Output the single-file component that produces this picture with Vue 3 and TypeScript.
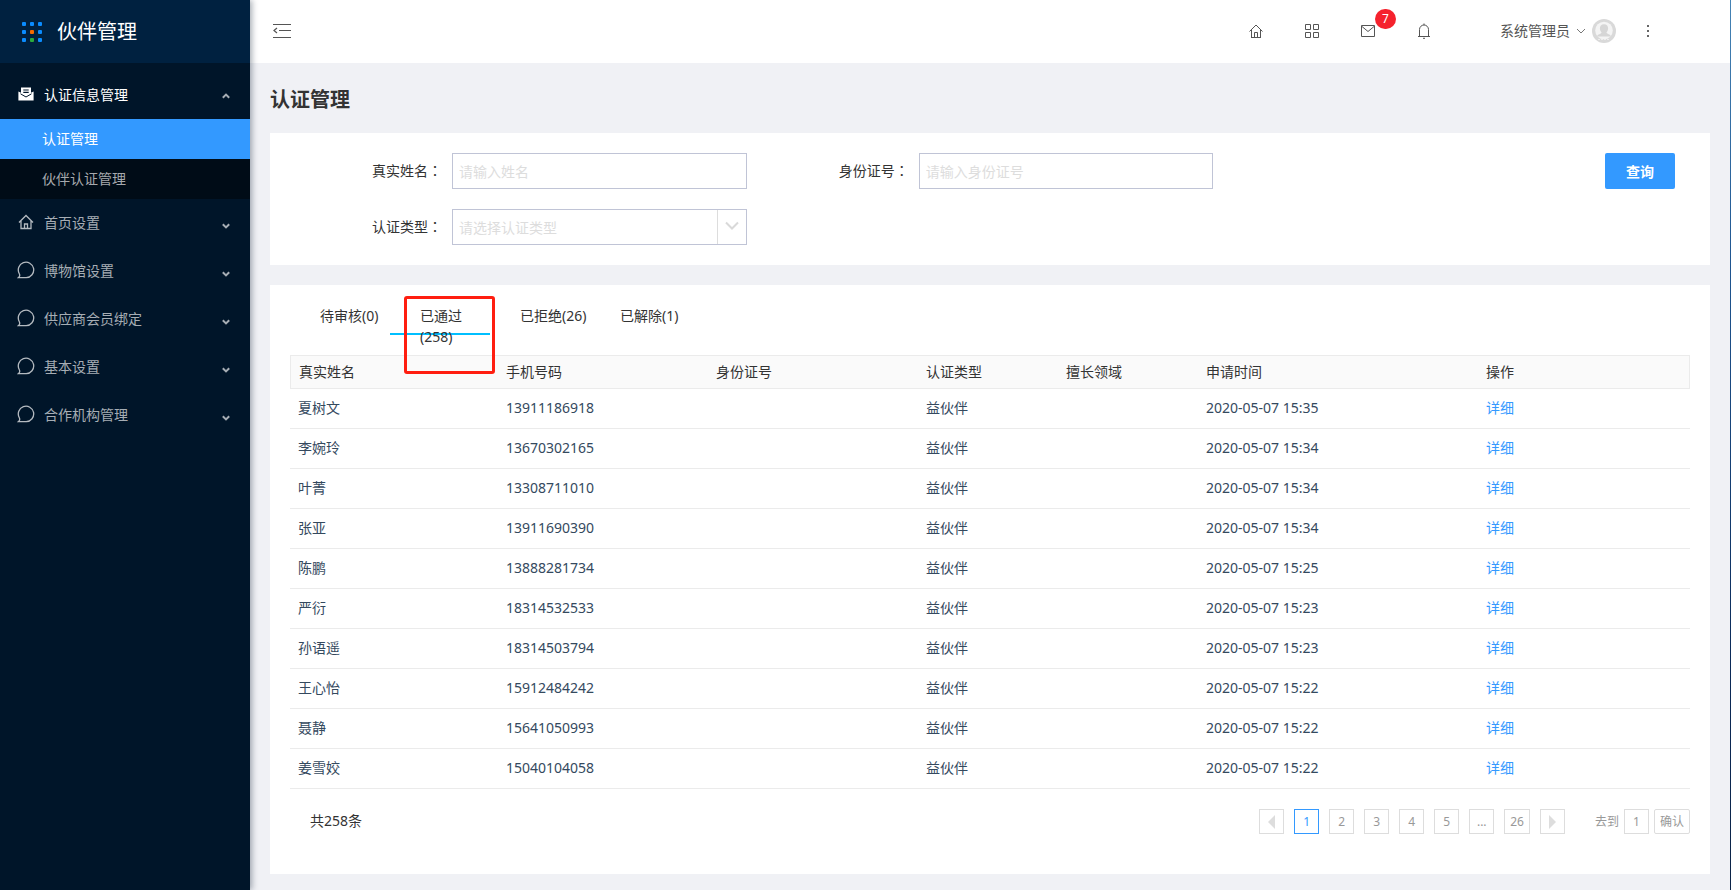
<script setup lang="ts">
import { ref } from 'vue'

interface Row {
  name: string
  phone: string
  time: string
}

const menus = [
  { label: '首页设置', icon: 'home' },
  { label: '博物馆设置', icon: 'chat' },
  { label: '供应商会员绑定', icon: 'chat' },
  { label: '基本设置', icon: 'chat' },
  { label: '合作机构管理', icon: 'chat' },
]

const tabs = ['待审核(0)', '已通过(258)', '已拒绝(26)', '已解除(1)']
const activeTab = ref(1)

const columns = ['真实姓名', '手机号码', '身份证号', '认证类型', '擅长领域', '申请时间', '操作']

const rows: Row[] = [
  { name: '夏树文', phone: '13911186918', time: '2020-05-07 15:35' },
  { name: '李婉玲', phone: '13670302165', time: '2020-05-07 15:34' },
  { name: '叶菁', phone: '13308711010', time: '2020-05-07 15:34' },
  { name: '张亚', phone: '13911690390', time: '2020-05-07 15:34' },
  { name: '陈鹏', phone: '13888281734', time: '2020-05-07 15:25' },
  { name: '严衍', phone: '18314532533', time: '2020-05-07 15:23' },
  { name: '孙语遥', phone: '18314503794', time: '2020-05-07 15:23' },
  { name: '王心怡', phone: '15912484242', time: '2020-05-07 15:22' },
  { name: '聂静', phone: '15641050993', time: '2020-05-07 15:22' },
  { name: '姜雪姣', phone: '15040104058', time: '2020-05-07 15:22' },
]

const pages = ['1', '2', '3', '4', '5', '...', '26']
const currentPage = ref('1')
const jumpPage = ref('1')
const realName = ref('')
const idNumber = ref('')
const certType = ref('')
</script>

<template>
  <div class="page">
    <aside class="sidebar">
      <div class="brand">
        <svg class="logo" viewBox="0 0 22 22" aria-hidden="true">
          <g fill="#0a8cff">
            <rect x="1" y="1" width="4" height="4" rx="1" /><rect x="9" y="1" width="4" height="4" rx="1" /><rect x="17" y="1" width="4" height="4" rx="1" />
            <rect x="1" y="9" width="4" height="4" rx="1" /><rect x="17" y="9" width="4" height="4" rx="1" />
            <rect x="1" y="17" width="4" height="4" rx="1" /><rect x="17" y="17" width="4" height="4" rx="1" />
          </g>
          <rect x="9" y="9" width="4" height="4" rx="1" fill="#f56a00" />
          <rect x="9" y="17" width="4" height="4" rx="1" fill="#2bab3c" />
        </svg>
        <span>伙伴管理</span>
      </div>
      <nav class="menu">
        <button type="button" class="menu-item open">
          <svg class="menu-icon" viewBox="0 0 18 18" aria-hidden="true">
            <path d="M4 2.5h10v5.2l2.6-1.2v9H1.4v-9L4 7.7z" fill="#fff" />
            <path d="M6.3 5h5.4M6.3 7.4h5.4" stroke="#001529" stroke-width="1.1" />
            <path d="M3.5 8.8L9 12l5.5-3.2" fill="none" stroke="#001529" stroke-width="1" />
          </svg>
          <span class="menu-text">认证信息管理</span>
          <svg class="arrow" viewBox="0 0 8 8" aria-hidden="true"><path d="M.8 5.8L4 2.6l3.2 3.2" /></svg>
        </button>
        <div class="submenu">
          <a href="#" class="active">认证管理</a>
          <a href="#">伙伴认证管理</a>
        </div>
        <button v-for="m in menus" :key="m.label" type="button" class="menu-item">
          <svg v-if="m.icon === 'home'" class="menu-icon line" viewBox="0 0 18 18" aria-hidden="true">
            <path d="M2 9.5L9 2.5l7 7M4 8v7.500h10V8M7.500 15.500V11h3v4.500M4 15.500h10" />
          </svg>
          <svg v-else class="menu-icon line" viewBox="0 0 18 18" aria-hidden="true">
            <path d="M1.500 16.600H9.200A7.700 7.700 0 1 0 2.300 12.700Q3.500 15 1.500 16.600z" />
          </svg>
          <span class="menu-text">{{ m.label }}</span>
          <svg class="arrow down" viewBox="0 0 8 8" aria-hidden="true"><path d="M.8 2.2L4 5.4l3.2-3.2" /></svg>
        </button>
      </nav>
    </aside>

    <div class="main">
      <header class="topbar">
        <button type="button" class="fold" aria-label="收起菜单">
          <svg viewBox="0 0 18 16" aria-hidden="true">
            <path d="M0 1.500h18M6 7.500h12M0 14.500h18M4 5L1 7.500L4 10" fill="none" stroke="#555" stroke-width="1.200" />
          </svg>
        </button>
        <div class="tools">
          <button type="button" class="tool" aria-label="首页">
            <svg viewBox="0 0 16 16" aria-hidden="true">
              <path d="M1.500 8.500L8 2l6.500 6.500M3.500 7v7.500h9V7M6.500 14.500V9.500h3v5M3 14.500h10" />
            </svg>
          </button>
          <button type="button" class="tool" aria-label="应用">
            <svg viewBox="0 0 16 16" aria-hidden="true">
              <path d="M1.500 1.500h5v5h-5zM9.500 1.500h5v5h-5zM1.500 9.500h5v5h-5zM9.500 9.500h5v5h-5z" />
            </svg>
          </button>
          <button type="button" class="tool" aria-label="消息">
            <svg viewBox="0 0 16 16" aria-hidden="true">
              <path d="M1.500 2.500h13v11h-13zM2 3.500l6 5l6-5" />
            </svg>
            <span class="badge">7</span>
          </button>
          <button type="button" class="tool" aria-label="通知">
            <svg viewBox="0 0 16 16" aria-hidden="true">
              <path d="M2 13.500h12M3.500 13.500V6.500a4.500 4.500 0 0 1 9 0v7M8 .5V2M7 15.300h2" />
            </svg>
          </button>
        </div>
        <button type="button" class="user">
          <span>系统管理员</span>
          <svg class="user-arrow" viewBox="0 0 10 10" aria-hidden="true"><path d="M1 3l4 4l4-4" /></svg>
          <svg class="avatar" viewBox="0 0 24 24" aria-hidden="true">
            <circle cx="12" cy="12" r="12" fill="#d9d9d9" />
            <circle cx="12" cy="11.500" r="8.800" fill="#f4f4f4" />
            <path d="M12 5.200c-2.800 0-4.300 1.900-4.100 4.400.1 1.800.8 3.100 1.700 4-.6 1.500-3.600 1.600-4.800 3.900h14.400c-1.200-2.300-4.200-2.400-4.800-3.900.9-.9 1.600-2.200 1.700-4 .2-2.500-1.300-4.400-4.100-4.400z" fill="#d6d6d6" />
            <path d="M6 20.500h12" stroke="#eee" stroke-width="1" stroke-dasharray="2 1" />
          </svg>
        </button>
        <button type="button" class="more" aria-label="更多">
          <svg viewBox="0 0 16 16" aria-hidden="true">
            <path d="M7 2h2v2H7zM7 7h2v2H7zM7 12h2v2H7z" fill="#666" />
          </svg>
        </button>
      </header>

      <main class="content">
        <h1>认证管理</h1>

        <form class="panel search" @submit.prevent>
          <div class="field">
            <label for="real-name">真实姓名<span class="colon">：</span></label>
            <input id="real-name" v-model="realName" type="text" placeholder="请输入姓名" />
          </div>
          <div class="field">
            <label for="id-number">身份证号<span class="colon">：</span></label>
            <input id="id-number" v-model="idNumber" type="text" placeholder="请输入身份证号" />
          </div>
          <div class="submit"><button type="submit">查询</button></div>
          <div class="field">
            <label for="cert-type">认证类型<span class="colon">：</span></label>
            <div class="select">
              <select id="cert-type" v-model="certType">
                <option value="">请选择认证类型</option>
                <option value="partner">益伙伴</option>
              </select>
              <span class="select-arrow">
                <svg viewBox="0 0 14 10" aria-hidden="true"><path d="M1 1.500l6 6l6-6" /></svg>
              </span>
            </div>
          </div>
        </form>

        <section class="panel list">
          <div class="tabs" role="tablist">
            <button
              v-for="(t, i) in tabs"
              :key="t"
              type="button"
              role="tab"
              class="tab"
              :class="{ current: i === activeTab }"
              :aria-selected="i === activeTab"
              @click="activeTab = i"
            >{{ t }}</button>
            <span class="marker"></span>
          </div>

          <table>
            <colgroup>
              <col class="w15" /><col class="w15" /><col class="w15" /><col class="w10" /><col class="w10" /><col class="w20" /><col class="w15" />
            </colgroup>
            <thead>
              <tr>
                <th v-for="c in columns" :key="c" scope="col">{{ c }}</th>
              </tr>
            </thead>
            <tbody>
              <tr v-for="r in rows" :key="r.phone">
                <td>{{ r.name }}</td>
                <td>{{ r.phone }}</td>
                <td></td>
                <td>益伙伴</td>
                <td></td>
                <td>{{ r.time }}</td>
                <td><a href="#">详细</a></td>
              </tr>
            </tbody>
          </table>

          <div class="footer">
            <span class="total">共258条</span>
            <div class="pager">
              <button type="button" class="page-btn" aria-label="上一页">
                <svg viewBox="0 0 8 14" aria-hidden="true"><path d="M7 0v14L0 7z" /></svg>
              </button>
              <button
                v-for="p in pages"
                :key="p"
                type="button"
                class="page-btn"
                :class="{ on: p === currentPage }"
                @click="currentPage = p"
              >{{ p }}</button>
              <button type="button" class="page-btn" aria-label="下一页">
                <svg viewBox="0 0 8 14" aria-hidden="true"><path d="M1 0v14l7-7z" /></svg>
              </button>
            </div>
            <div class="jump">
              <label for="jump-page">去到</label>
              <input id="jump-page" v-model="jumpPage" type="text" />
              <button type="button">确认</button>
            </div>
          </div>
        </section>
      </main>
    </div>
  </div>
</template>

<style>
body {
  margin: 0;
  background: #f0f1f5;
}
</style>

<style scoped>
.page,
.page * {
  box-sizing: border-box;
}

.page {
  display: flex;
  min-height: 100vh;
  padding-right: 1px;
  background: linear-gradient(#4583b5, #1f5590 30%, #0b2a58 75%, #0b2347);
  color: #333;
  font: 14px/21px "Noto Sans", "Noto Sans CJK SC", sans-serif;
}

button,
input,
select {
  margin: 0;
  padding: 0;
  border: 0;
  background: none;
  color: inherit;
  font: inherit;
}

button {
  cursor: pointer;
}

a {
  text-decoration: none;
}

svg {
  display: block;
}

.sidebar {
  position: relative;
  z-index: 2;
  flex: 0 0 250px;
  background: #001529;
  box-shadow: 2px 0 6px rgba(0, 21, 41, 0.35);
}

.brand {
  display: flex;
  align-items: center;
  gap: 14px;
  height: 63px;
  padding-left: 21px;
  background: #002140;
  color: #fff;
  font-size: 20px;
  line-height: 30px;
}

.logo {
  width: 22px;
  height: 22px;
}

.menu {
  padding-top: 8px;
}

.menu-item {
  display: flex;
  align-items: center;
  width: 100%;
  height: 48px;
  padding: 0 20px 2px 17px;
  color: #a6adb4;
  text-align: left;
}

.menu-item.open {
  color: #fff;
}

.menu-icon {
  width: 18px;
  height: 18px;
  margin-right: 9px;
}

.menu-icon.line {
  fill: none;
  stroke: #b4bac0;
  stroke-width: 1.3;
}

.menu-text {
  flex: 1;
}

.arrow {
  width: 8px;
  height: 8px;
  margin-top: 4px;
  fill: none;
  stroke: #a6adb4;
  stroke-width: 2;
}

.arrow.down {
  margin-top: 8px;
}

.submenu {
  background: #000c17;
}

.submenu a {
  display: block;
  padding-left: 42px;
  color: #a6a9ad;
  line-height: 40px;
}

.submenu a.active {
  background: #3399ff;
  color: #fff;
}

.main {
  display: flex;
  flex: 1;
  flex-direction: column;
  min-width: 0;
  background: #f0f1f5;
}

.topbar {
  display: flex;
  align-items: center;
  height: 63px;
  padding: 0 74px 2px 23px;
  background: #fff;
}

.fold svg {
  width: 18px;
  height: 16px;
}

.tools {
  display: flex;
  margin-left: auto;
}

.tool {
  position: relative;
  display: flex;
  align-items: center;
  justify-content: center;
  width: 56px;
  height: 60px;
}

.tool svg {
  width: 16px;
  height: 16px;
  fill: none;
  stroke: #555;
  stroke-width: 1;
}

.badge {
  position: absolute;
  top: 8px;
  left: 35px;
  width: 21px;
  height: 20px;
  border-radius: 10px;
  background: #f5222d;
  color: #fff;
  font-size: 12px;
  line-height: 20px;
}

.user {
  display: flex;
  align-items: center;
  gap: 6px;
  margin-left: 48px;
  color: #555;
}

.user-arrow {
  width: 10px;
  height: 10px;
  fill: none;
  stroke: #777;
  stroke-width: 1;
}

.avatar {
  width: 24px;
  height: 24px;
}

.more {
  margin-left: 24px;
}

.more svg {
  width: 16px;
  height: 16px;
}

.content {
  padding: 22px 20px 16px;
}

h1 {
  margin: 0 0 18px;
  font-size: 20px;
  font-weight: 700;
  line-height: 30px;
}

.panel {
  background: #fff;
}

.search {
  display: grid;
  grid-template-columns: repeat(3, 1fr);
  gap: 20px 0;
  padding: 20px;
}

.field {
  display: flex;
  min-width: 0;
  padding: 0 10px;
}

.field label {
  flex: 0 0 152px;
  height: 36px;
  padding-right: 10px;
  line-height: 36px;
  text-align: right;
}

.field .colon {
  font-family: "Noto Sans CJK TC", sans-serif;
  line-height: 20px;
}

.field input,
.select {
  flex: 1;
  min-width: 0;
  height: 36px;
  border: 1px solid #c0c4d6;
}

.field input {
  padding: 0 6px;
}

.field input::placeholder {
  color: #ddd;
  opacity: 1;
}

.select {
  position: relative;
}

.select select {
  width: 100%;
  height: 34px;
  padding: 0 36px 0 6px;
  appearance: none;
  color: #ddd;
}

.select-arrow {
  position: absolute;
  top: 0;
  right: 0;
  display: flex;
  justify-content: center;
  width: 29px;
  height: 34px;
  padding-top: 11px;
  border-left: 1px solid #ddd;
  pointer-events: none;
}

.select-arrow svg {
  width: 14px;
  height: 10px;
  fill: none;
  stroke: #d9d9d9;
  stroke-width: 2;
}

.submit {
  display: flex;
  justify-content: flex-end;
  padding-right: 15px;
}

.submit button {
  width: 70px;
  height: 36px;
  border-radius: 2px;
  background: #3399ff;
  color: #fff;
  font-weight: 700;
}

.list {
  margin-top: 20px;
  padding: 20px 20px 40px;
}

.tabs {
  position: relative;
  display: flex;
  height: 50px;
}

.tab {
  display: flex;
  align-items: flex-start;
  width: 100px;
  height: 30px;
  padding: 0 0 0 30px;
  text-align: left;
}

.tab.current {
  border-bottom: 2px solid #00bfff;
}

/* Highlight frame around the approved tab */
.marker {
  position: absolute;
  top: -9px;
  left: 114px;
  width: 91px;
  height: 78px;
  border: 3px solid #ff1e10;
  border-radius: 3px;
  pointer-events: none;
}

table {
  width: 100%;
  border-collapse: separate;
  border-spacing: 0;
  table-layout: fixed;
}

.w10 {
  width: 10%;
}

.w15 {
  width: 15%;
}

.w20 {
  width: 20%;
}

th,
td {
  padding: 0 6px 2px;
  border-bottom: 1px solid #ebebeb;
  text-align: left;
  font-weight: 400;
}

th:first-child,
td:first-child {
  padding-left: 8px;
}

th {
  height: 34px;
  border-top: 1px solid #ebebeb;
  background: #fafafa;
}

th:first-child {
  border-left: 1px solid #ebebeb;
}

th:last-child {
  border-right: 1px solid #ebebeb;
}

td {
  height: 40px;
  color: #34495e;
}

td a {
  color: #3399ff;
}

.footer {
  display: flex;
  align-items: flex-start;
  padding-top: 20px;
  color: #999;
  font-size: 12px;
  line-height: 23px;
}

.total {
  margin-right: auto;
  padding-left: 20px;
  color: #333;
  font-size: 14px;
}

.pager {
  display: flex;
  gap: 10px;
}

.page-btn {
  display: flex;
  align-items: center;
  justify-content: center;
  min-width: 25px;
  height: 25px;
  padding: 0 5px;
  border: 1px solid #ddd;
}

.page-btn.on {
  border-color: #3399ff;
  color: #3399ff;
}

.page-btn svg {
  width: 8px;
  height: 14px;
  fill: #ddd;
}

.jump {
  display: flex;
  align-items: center;
  gap: 5px;
  margin-left: 30px;
}

.jump input {
  width: 25px;
  height: 25px;
  border: 1px solid #ddd;
  text-align: center;
}

.jump button {
  width: 36px;
  height: 25px;
  border: 1px solid #ddd;
  border-radius: 2px;
}
</style>
